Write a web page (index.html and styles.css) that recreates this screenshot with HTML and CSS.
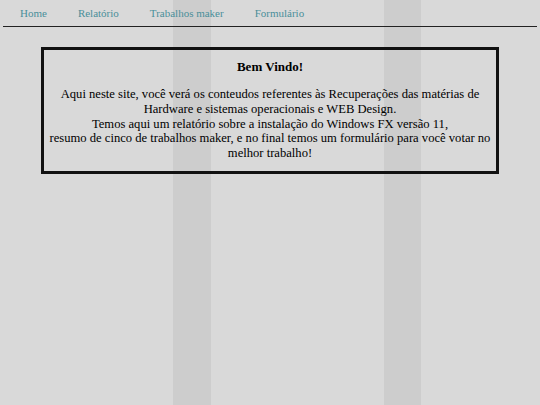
FILE: index.html
```html
<!DOCTYPE html>
<html lang="pt-BR">
<head>
<meta charset="utf-8">
<title>Bem Vindo</title>
<link rel="stylesheet" href="styles.css">
</head>
<body>
<nav class="menu">
  <a class="menu-link" href="#">Home</a>
  <a class="menu-link" href="#">Relatório</a>
  <a class="menu-link" href="#">Trabalhos maker</a>
  <a class="menu-link" href="#">Formulário</a>
</nav>
<div class="rule"></div>
<section class="welcome">
  <h1 class="welcome-title">Bem Vindo!</h1>
  <p class="welcome-text">Aqui neste site, você verá os conteudos referentes às Recuperações das matérias de Hardware e sistemas operacionais e WEB Design.<br>Temos aqui um relatório sobre a instalação do Windows FX versão 11,<br>resumo de cinco de trabalhos maker, e no final temos um formulário para você votar no melhor trabalho!</p>
</section>
</body>
</html>
```

FILE: styles.css
```css
html, body {
  margin: 0;
  padding: 0;
  height: 100%;
}
body {
  font-family: "Liberation Serif", "Times New Roman", serif;
  color: #000;
  background-color: #d9d9d9;
  background-image: linear-gradient(to right,
    #d9d9d9 0, #d9d9d9 173px,
    #cdcdcd 173px, #cdcdcd 211px,
    #d9d9d9 211px, #d9d9d9 384px,
    #cdcdcd 384px, #cdcdcd 421px,
    #d9d9d9 421px);
}
.menu {
  display: flex;
  gap: 31px;
  padding: 0 0 0 20px;
  height: 26px;
  align-items: center;
  box-sizing: border-box;
}
.menu-link {
  font-size: 11px;
  color: #4a8f9a;
  text-decoration: none;
  line-height: 13px;
}
.rule {
  height: 1px;
  background: #222;
  margin: 0 3px;
}
.welcome {
  width: 458px;
  box-sizing: border-box;
  margin: 20px auto 0 41px;
  border: 3px solid #111;
  padding: 9px 4px 10px;
  text-align: center;
}
.welcome-title {
  font-size: 13px;
  font-weight: bold;
  margin: 0 0 13px;
  line-height: 15px;
}
.welcome-text {
  font-size: 12.6px;
  line-height: 14.8px;
  margin: 0;
}
```
